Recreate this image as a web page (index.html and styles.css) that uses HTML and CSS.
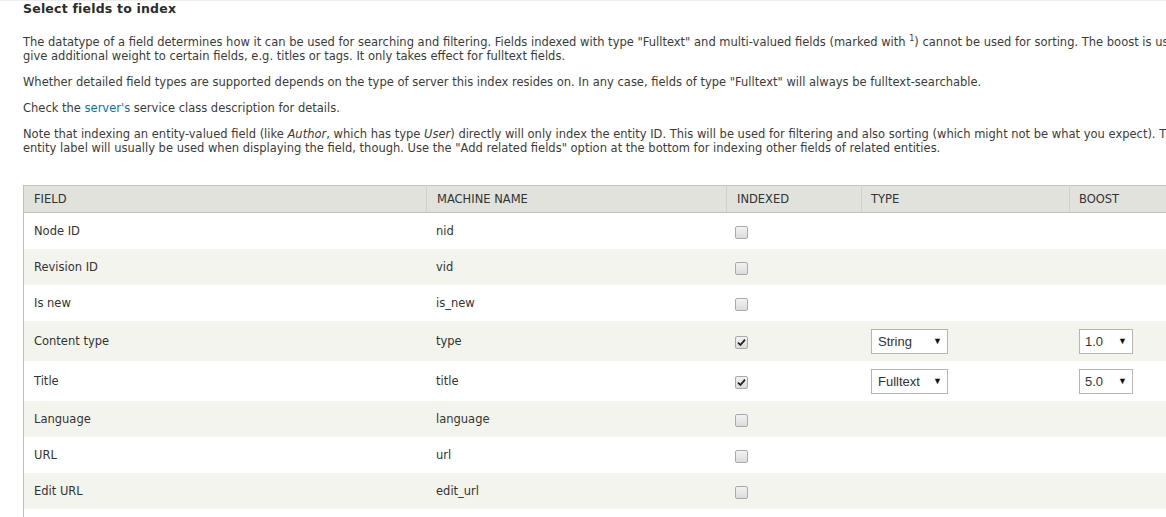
FILE: index.html
```html
<!DOCTYPE html>
<html>
<head>
<meta charset="utf-8">
<link rel="stylesheet" href="styles.css">
</head>
<body>
<div class="page">
  <h2 class="title">Select fields to index</h2>
  <p class="desc">The datatype of a field determines how it can be used for searching and filtering. Fields indexed with type "Fulltext" and multi-valued fields (marked with <sup>1</sup>) cannot be used for sorting. The boost is used to<br>give additional weight to certain fields, e.g. titles or tags. It only takes effect for fulltext fields.</p>
  <p class="desc">Whether detailed field types are supported depends on the type of server this index resides on. In any case, fields of type "Fulltext" will always be fulltext-searchable.</p>
  <p class="desc">Check the <a href="#" class="link">server's</a> service class description for details.</p>
  <p class="desc">Note that indexing an entity-valued field (like <em>Author</em>, which has type <em>User</em>) directly will only index the entity ID. This will be used for filtering and also sorting (which might not be what you expect). The<br>entity label will usually be used when displaying the field, though. Use the "Add related fields" option at the bottom for indexing other fields of related entities.</p>

  <table class="fields">
    <thead>
      <tr>
        <th class="c-field">Field</th>
        <th class="c-machine">Machine name</th>
        <th class="c-indexed">Indexed</th>
        <th class="c-type">Type</th>
        <th class="c-boost">Boost</th>
      </tr>
    </thead>
    <tbody>
      <tr><td>Node ID</td><td>nid</td><td><span class="cb"></span></td><td></td><td></td></tr>
      <tr><td>Revision ID</td><td>vid</td><td><span class="cb"></span></td><td></td><td></td></tr>
      <tr><td>Is new</td><td>is_new</td><td><span class="cb"></span></td><td></td><td></td></tr>
      <tr class="tall"><td>Content type</td><td>type</td><td><span class="cb checked"><svg width="9" height="9" viewBox="0 0 9 9"><path d="M1 4.6 L3.4 7 L8 1.6" fill="none" stroke="#222" stroke-width="1.8"/></svg></span></td><td><div class="sel sel-type"><span>String</span><span class="arr">▼</span></div></td><td><div class="sel sel-boost"><span>1.0</span><span class="arr">▼</span></div></td></tr>
      <tr class="tall"><td>Title</td><td>title</td><td><span class="cb checked"><svg width="9" height="9" viewBox="0 0 9 9"><path d="M1 4.6 L3.4 7 L8 1.6" fill="none" stroke="#222" stroke-width="1.8"/></svg></span></td><td><div class="sel sel-type"><span>Fulltext</span><span class="arr">▼</span></div></td><td><div class="sel sel-boost"><span>5.0</span><span class="arr">▼</span></div></td></tr>
      <tr><td>Language</td><td>language</td><td><span class="cb"></span></td><td></td><td></td></tr>
      <tr><td>URL</td><td>url</td><td><span class="cb"></span></td><td></td><td></td></tr>
      <tr><td>Edit URL</td><td>edit_url</td><td><span class="cb"></span></td><td></td><td></td></tr>
      <tr><td>&nbsp;</td><td></td><td></td><td></td><td></td></tr>
    </tbody>
  </table>
</div>
</body>
</html>
```

FILE: styles.css
```css
html, body {
  margin: 0;
  padding: 0;
  background: #fff;
  overflow: hidden;
}
body {
  font-family: "DejaVu Sans", Verdana, sans-serif;
  font-size: 11.5px;
  color: #3b3b3b;
  border-top: 1px solid #eeeeee;
}
.page {
  width: 1300px;
  padding-left: 23px;
}
.title {
  margin: 0;
  font-size: 12.5px;
  line-height: 15px;
  font-weight: bold;
  letter-spacing: 0.2px;
  color: #2b2b2b;
}
.desc {
  margin: 0 0 12px;
  line-height: 14px;
  white-space: nowrap;
}
.title + .desc {
  margin-top: 19px;
}
.desc sup {
  font-size: 8px;
  line-height: 0;
}
.link {
  color: #0074bd;
  text-decoration: none;
}
.fields {
  margin-top: 30px;
  width: 1250px;
  table-layout: fixed;
  border-collapse: separate;
  border-spacing: 0;
  border-left: 1px solid #bebfb9;
}
.fields th {
  box-sizing: border-box;
  height: 28px;
  padding: 0 10px;
  text-align: left;
  font-weight: normal;
  text-transform: uppercase;
  color: #333;
  background: #e1e2dc;
  border-top: 1px solid #c4c5bf;
  border-bottom: 1px solid #bebfb9;
  border-left: 1px solid #cfd0ca;
}
.fields th.c-field { width: 402px; border-left: 0; }
.fields th.c-machine { width: 300px; }
.fields th.c-indexed { width: 135px; }
.fields th.c-type { width: 208px; padding-left: 9px; }
.fields th.c-boost { width: 205px; padding-left: 9px; }
.fields td {
  height: 36px;
  padding: 0 10px;
  vertical-align: middle;
  color: #333;
}
.fields td:nth-child(3) { padding-left: 9px; }
.fields tr.tall td { height: 40px; }
.fields tbody tr:nth-child(even) td { background: #f3f4ee; }
.cb {
  display: inline-flex;
  align-items: center;
  justify-content: center;
  box-sizing: border-box;
  width: 13px;
  height: 13px;
  margin-top: 3px;
  border: 1px solid #a9a9a9;
  border-radius: 2px;
  background: linear-gradient(#f2f2f2, #dcdcdc);
  vertical-align: middle;
}
.sel {
  display: flex;
  align-items: center;
  justify-content: space-between;
  box-sizing: border-box;
  height: 25px;
  padding: 0 5px 0 6px;
  border: 1px solid #b5b5b5;
  background: #fff;
  font-family: "Liberation Sans", Arial, sans-serif;
  font-size: 13px;
  color: #333;
}
.sel-type { width: 77px; }
.sel-boost { width: 54px; padding-left: 5px; }
.arr {
  font-size: 9px;
  color: #111;
}
```
